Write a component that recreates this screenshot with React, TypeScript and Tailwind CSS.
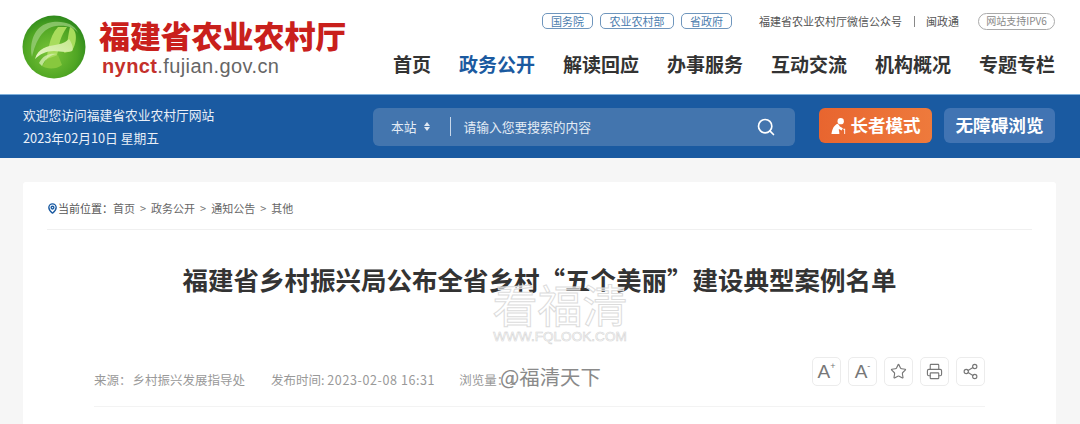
import React from "react";
import { Search, MapPin, Star, Printer, Share2 } from "lucide-react";

const cjk = '"Noto Sans CJK SC","Liberation Sans",sans-serif';

function Logo() {
  return (
    <svg width="64" height="64" viewBox="0 0 64 64" className="shrink-0">
      <defs>
        <radialGradient id="lg" cx="45%" cy="60%" r="60%">
          <stop offset="0%" stopColor="#7cc63a" />
          <stop offset="70%" stopColor="#4fa523" />
          <stop offset="100%" stopColor="#2f8a1c" />
        </radialGradient>
        <linearGradient id="lf" x1="0" y1="1" x2="1" y2="0">
          <stop offset="0%" stopColor="#e6f5c8" />
          <stop offset="100%" stopColor="#c5e88c" />
        </linearGradient>
      </defs>
      <circle cx="32" cy="32" r="31.5" fill="url(#lg)" />
      <path d="M10 42C7 28 12 12 26 8C37 5 52 7 56 18C52 12 44 10 34 11C20 13 14 26 10 42Z" fill="#9ccf7c" opacity="0.75" />
      <path d="M22 52C27 38 26 22 36 12L45 12C38 22 37 30 36 36L32 52Z" fill="#a8dc5c" />
      <path d="M48 12C55 14 56 26 50 36L42 38C46 28 46 20 48 12Z" fill="#a8dc5c" />
      <path d="M20 51C24 54 34 55 40 50L36 40L25 44Z" fill="#88c83e" />
      <path d="M13 44C16 33 26 31 33 30C40 29 44 27 47 24C50 28 52 34 50 36C42 38 38 36 32 36C24 36 18 39 13 44Z" fill="url(#lf)" />
      <path d="M17 48C21 40 28 38 35 39C28 40 23 44 20 51Z" fill="#d6efae" opacity="0.8" />
    </svg>
  );
}

function Pill({ text, w }: { text: string; w: string }) {
  return (
    <span className={`flex h-[16px] items-center justify-center rounded-[5px] border border-[#6f96bd] text-[11px] leading-none text-[#4a7cae] ${w}`}>
      {text}
    </span>
  );
}

function Elder() {
  return (
    <svg width="15" height="18" viewBox="0 0 17 20" fill="#fff">
      <circle cx="11" cy="4.5" r="3.6" />
      <path d="M7.5 7.5C3.5 9 1.5 13 0.5 19H9.5C9.5 16 8.5 14.5 9 13.5L12 15L13.5 12.5L10 10.5C9.5 9.5 8.5 8 7.5 7.5Z" />
      <path d="M14 13H16V19H15V14.2H14Z" />
    </svg>
  );
}

function IconBox({ children }: { children: React.ReactNode }) {
  return (
    <span className="flex size-[29px] items-center justify-center rounded-[5px] border border-[#ececec] text-[#777]">
      {children}
    </span>
  );
}

const crumbs = ["首页", "政务公开", "通知公告", "其他"];

export default function App() {
  const nav = ["首页", "政务公开", "解读回应", "办事服务", "互动交流", "机构概况", "专题专栏"];
  return (
    <div className="relative flex h-[424px] w-[1080px] flex-col overflow-hidden bg-[#f6f6f6]" style={{ fontFamily: cjk }}>
      <header className="flex h-[94px] shrink-0 items-start justify-between bg-white pl-[22px] pr-[25px]">
        <div className="flex items-center gap-[13px] pt-[15px]">
          <Logo />
          <div className="flex flex-col">
            <span className="text-[31px] font-black leading-[37px] tracking-[-0.1px] text-[#c9201c]">福建省农业农村厅</span>
            <span className="pl-[3px] pt-[2px] text-[20px] leading-[23px] tracking-[0.4px] text-[#666]" style={{ fontFamily: '"Liberation Sans",sans-serif' }}>
              <span className="font-bold text-[#c4302b]">nynct</span>.fujian.gov.cn
            </span>
          </div>
        </div>
        <div className="flex flex-col items-end pt-[13px]">
          <div className="flex h-[16px] items-center">
            <div className="flex gap-[7px]">
              <Pill text="国务院" w="w-[51px]" />
              <Pill text="农业农村部" w="w-[74px]" />
              <Pill text="省政府" w="w-[51px]" />
            </div>
            <span className="ml-[27px] text-[11px] leading-none text-[#555]">福建省农业农村厅微信公众号</span>
            <span className="ml-[12px] mr-[11px] h-[11px] w-px bg-[#888]" />
            <span className="text-[11px] leading-none text-[#555]">闽政通</span>
            <span className="ml-[19px] flex h-[17px] w-[77px] items-center justify-center rounded-full border border-[#aaa] text-[10px] leading-none text-[#888]">网站支持IPV6</span>
          </div>
          <nav className="mt-[21px] flex gap-[28px]">
            {nav.map((n) => (
              <span key={n} className={`text-[19px] font-bold leading-[28px] ${n === "政务公开" ? "text-[#1b5aa0]" : "text-[#333]"}`}>{n}</span>
            ))}
          </nav>
        </div>
      </header>

      <div className="flex h-[64px] shrink-0 items-center border-t border-[#7fb0dc] bg-[#1a5aa1] pl-[23px] pr-[25px]">
        <div className="flex w-[350px] flex-col gap-[5px] text-[12.75px] leading-[18px] text-[#e9eff7]">
          <span>欢迎您访问福建省农业农村厅网站</span>
          <span>2023年02月10日 星期五</span>
        </div>
        <div className="flex h-[38px] w-[422px] items-center rounded-[6px] bg-[#4375ae] pl-[18px] pr-[19px] text-[12.75px] text-[#e4ecf5]">
          <span>本站</span>
          <span className="ml-[6px] flex w-[8px] flex-col items-center gap-[1px]">
            <span className="border-x-[3px] border-b-[4px] border-x-transparent border-b-[#dfe8f3]" />
            <span className="border-x-[3px] border-t-[4px] border-x-transparent border-t-[#dfe8f3]" />
          </span>
          <span className="ml-[19px] h-[19px] w-px bg-[#c9d8ea]" />
          <span className="ml-[13px] flex-1">请输入您要搜索的内容</span>
          <Search size={20} strokeWidth={2} className="text-white" />
        </div>
        <div className="mb-[2px] ml-[24px] flex h-[35px] w-[113px] items-center justify-center gap-[5px] rounded-[6px] bg-gradient-to-r from-[#e8652f] to-[#ee7a3c] text-[17.5px] font-bold text-white">
          <Elder />
          <span>长者模式</span>
        </div>
        <div className="mb-[2px] ml-[12px] flex h-[35px] w-[111px] items-center justify-center rounded-[6px] bg-[#4174b3] text-[17.6px] font-bold text-white">无障碍浏览</div>
      </div>

      <main className="ml-[23px] mr-[24px] mt-[24px] flex-1 rounded-t-[3px] bg-white px-[24px]">
        <div className="flex h-[48px] items-center border-b border-[#f0f0f0] pt-[5px] text-[11px] text-[#666]">
          <MapPin size={11} strokeWidth={3} className="text-[#1a5aa1]" />
          <span className="text-[#555]">当前位置：</span>
          {crumbs.map((c, i) => (
            <span key={c} className="flex items-center">
              {i > 0 && <span className="mx-[5px] text-[#777]">&gt;</span>}
              <span>{c}</span>
            </span>
          ))}
        </div>
        <h1 className="mt-[33px] text-center text-[25.5px] font-bold leading-[32px] text-[#333]">
          福建省乡村振兴局公布全省乡村“五个美丽”建设典型案例名单
        </h1>
        <div className="ml-[47px] mr-[47px] mt-[62px] flex h-[50px] items-start justify-between border-b border-[#f3f3f3]">
          <div className="flex items-center pt-[14px] text-[12.5px] leading-[18px] text-[#999]">
            <span>来源：</span>
            <span className="ml-[1px]">乡村振兴发展指导处</span>
            <span className="ml-[26px]">发布时间: <span className="tracking-[0.6px]">2023-02-08 16:31</span></span>
            <span className="ml-[24px]">浏览量：1</span>
          </div>
          <div className="flex gap-[7px]">
            <IconBox>
              <span className="flex items-start text-[19px] font-light leading-none text-[#777]" style={{ fontFamily: '"Liberation Sans",sans-serif' }}>A<span className="text-[9px] leading-[9px]">+</span></span>
            </IconBox>
            <IconBox>
              <span className="flex items-start text-[19px] font-light leading-none text-[#777]" style={{ fontFamily: '"Liberation Sans",sans-serif' }}>A<span className="text-[9px] leading-[9px]">-</span></span>
            </IconBox>
            <IconBox><Star size={17} strokeWidth={1.6} /></IconBox>
            <IconBox><Printer size={17} strokeWidth={1.6} /></IconBox>
            <IconBox><Share2 size={17} strokeWidth={1.6} /></IconBox>
          </div>
        </div>
      </main>

      <div className="pointer-events-none absolute left-[492px] top-[279px] flex w-[136px] flex-col items-center">
        <span className="text-[45px] font-normal leading-[50px] text-white/60 [-webkit-text-stroke:1px_#dcdcdc]">看福清</span>
        <span className="mt-[1px] text-[13.6px] leading-[14px] text-white [-webkit-text-stroke:0.6px_#d4d4d4]" style={{ fontFamily: '"Liberation Sans",sans-serif' }}>WWW.FQLOOK.COM</span>
      </div>
      <span className="pointer-events-none absolute left-[500px] top-[362px] text-[20.4px] leading-[28px] text-[#8a8a8a]">@福清天下</span>
    </div>
  );
}
